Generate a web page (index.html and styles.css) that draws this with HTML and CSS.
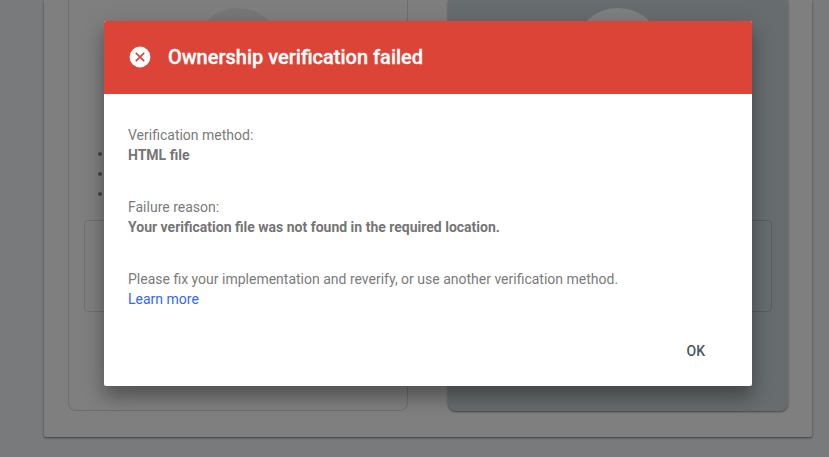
FILE: index.html
```html
<!DOCTYPE html>
<html lang="en">
<head>
<meta charset="utf-8">
<title>Ownership verification</title>
<link rel="stylesheet" href="styles.css">
</head>
<body>
<main class="panel">
  <section class="card">
    <div class="avatar"></div>
    <ul class="steps"><li></li><li></li><li></li></ul>
    <div class="box"></div>
  </section>
  <section class="card card-selected">
    <div class="avatar"></div>
    <div class="box"></div>
  </section>
</main>
<div class="overlay">
  <div class="dialog" role="dialog" aria-labelledby="title">
    <header class="dialog-header">
      <svg class="icon" viewBox="0 0 22 22" aria-hidden="true">
        <circle cx="11" cy="11" r="10.4" fill="#fff"/>
        <path d="M6.8 6.8l8.4 8.4M15.2 6.8l-8.4 8.4" stroke="#db4437" stroke-width="1.7" fill="none"/>
      </svg>
      <h1 id="title">Ownership verification failed</h1>
    </header>
    <div class="dialog-body">
      <p>Verification method:<br><b>HTML file</b></p>
      <p>Failure reason:<br><b>Your verification file was not found in the required location.</b></p>
      <p>Please fix your implementation and reverify, or use another verification method.<br><a href="#">Learn more</a></p>
    </div>
    <footer class="dialog-actions"><button type="button">OK</button></footer>
  </div>
</div>
</body>
</html>
```
FILE: styles.css
```css
* { box-sizing: border-box; }
body {
  margin: 0;
  height: 457px;
  overflow: hidden;
  background: #f2f4f8;
  font-family: Roboto, "Liberation Sans", sans-serif;
  font-size: 14px;
}
.panel {
  display: flex;
  gap: 40px;
  width: 768px;
  height: 437px;
  margin-left: 44px;
  padding: 0 24px 26px;
  background: #fff;
  border-radius: 0 0 2px 2px;
  box-shadow: 0 1px 2px rgba(0,0,0,.4), 0 1px 3px rgba(0,0,0,.15);
}
.card {
  display: flex;
  flex-direction: column;
  width: 340px;
  padding: 8px 15px 0;
  border: 1px solid #dadce0;
  border-top: 0;
  border-radius: 0 0 8px 8px;
}
.card-selected {
  border-color: transparent;
  background: #cfd8dc border-box;
  box-shadow: 0 1px 2px rgba(0,0,0,.35), 0 1px 3px rgba(0,0,0,.15);
}
.avatar {
  flex: none;
  align-self: center;
  width: 88px;
  height: 88px;
  border-radius: 50%;
  background: #eceff1;
}
.card-selected .avatar { background: #fff; }
.steps {
  margin: 48px 0 -108px;
  padding: 0 0 0 14px;
  list-style: none;
}
.steps li { height: 20px; padding-top: 8px; }
.steps li::before {
  content: "";
  display: block;
  width: 4px;
  height: 4px;
  border-radius: 50%;
  background: #78909c;
}
.box {
  height: 92px;
  margin-top: 124px;
  border: 1px solid rgba(0,0,0,.12);
  border-radius: 4px;
}
.overlay {
  position: absolute;
  inset: 0;
  display: flex;
  justify-content: center;
  align-items: flex-start;
  padding: 21px 0 0 27px;
  background: rgba(0,0,0,.5);
}
.dialog {
  width: 648px;
  height: 365px;
  display: flex;
  flex-direction: column;
  overflow: hidden;
  background: #fff;
  border-radius: 2px;
  box-shadow: 0 12px 15px rgba(0,0,0,.18), 0 8px 24px rgba(0,0,0,.22);
}
.dialog-header {
  display: flex;
  align-items: center;
  gap: 17px;
  height: 73px;
  padding: 0 0 2px 25px;
  background: #db4437;
  color: #fff;
}
.icon { width: 22px; height: 22px; }
h1 {
  margin: 0;
  font-size: 20px;
  line-height: 24px;
  font-weight: 500;
  -webkit-text-stroke: .3px #fff;
}
.dialog-body {
  display: flex;
  flex-direction: column;
  gap: 32px;
  padding: 31px 24px 0;
  color: #7b7b7b;
}
.dialog-body b { color: #757575; }
p { margin: 0; line-height: 20px; }
a { color: #3367ff; text-decoration: none; }
.dialog-actions {
  display: flex;
  justify-content: flex-end;
  padding: 24px 47px 0 0;
}
button {
  padding: 0;
  border: 0;
  background: none;
  color: #455a64;
  font: 500 14px/36px Roboto, "Liberation Sans", sans-serif;
}
```
